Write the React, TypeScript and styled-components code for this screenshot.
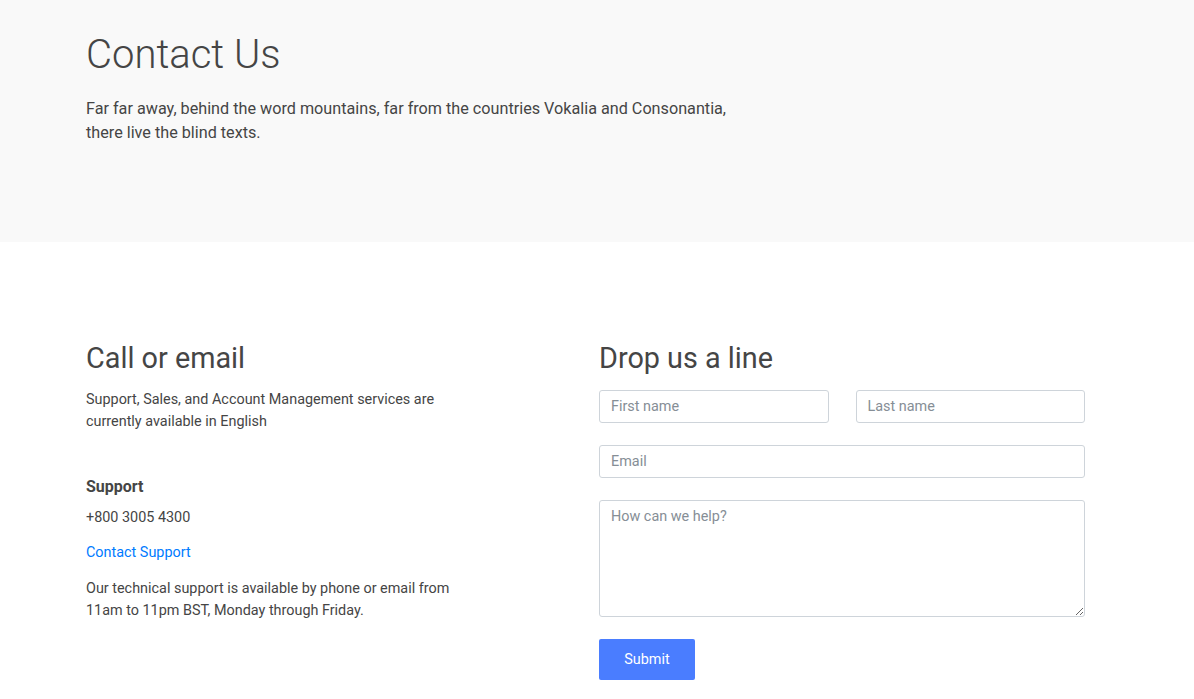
import React from "react";
import styled, { createGlobalStyle } from "styled-components";

const Global = createGlobalStyle`
  * { box-sizing: border-box; }
  body {
    margin: 0;
    background: #fff;
    font-family: Roboto, "Liberation Sans", sans-serif;
    color: #454545;
  }
`;

const Hero = styled.header`
  background: #f9f9f9;
  height: 242px;
  padding-top: 31px;
`;

const Container = styled.div`
  width: 1000px;
  margin-left: 86px;
`;

const Title = styled.h1`
  margin: 0 0 18px;
  font-size: 40px;
  line-height: 48px;
  font-weight: 300;
  color: #454545;
`;

const Lead = styled.p`
  margin: 0;
  font-size: 16.2px;
  line-height: 24px;
  max-width: 660px;
`;

const Section = styled.section`
  padding-top: 99px;
  padding-bottom: 40px;
`;

const Columns = styled.div`
  display: grid;
  grid-template-columns: 513px 486px;
`;

const Col = styled.div`
  display: flex;
  flex-direction: column;
`;

const Heading = styled.h2`
  margin: 0;
  font-size: 28.8px;
  line-height: 34px;
  font-weight: 400;
  color: #454545;
`;

const Text = styled.p<{ $top: number }>`
  margin: ${(p) => p.$top}px 0 0;
  font-size: 14.4px;
  line-height: 21.6px;
  max-width: 375px;
`;

const Label = styled.h3`
  margin: 43px 0 0;
  font-size: 16px;
  line-height: 24px;
  font-weight: 700;
`;

const Link = styled.a`
  margin-top: 13px;
  font-size: 14.4px;
  line-height: 21.6px;
  color: #007bff;
  text-decoration: none;
`;

const Form = styled.form`
  display: flex;
  flex-direction: column;
  gap: 22px;
  margin-top: 15px;
`;

const Row = styled.div`
  display: grid;
  grid-template-columns: 1fr 1fr;
  column-gap: 27px;
`;

const fieldCss = `
  width: 100%;
  border: 1px solid #ced4da;
  border-radius: 3px;
  background: #fff;
  font-family: Roboto, "Liberation Sans", sans-serif;
  font-size: 14.4px;
  color: #495057;
  padding: 0 11px;
  outline: none;
  &::placeholder { color: #868e96; }
`;

const Input = styled.input`
  ${fieldCss}
  height: 33px;
  padding-bottom: 1px;
`;

const TextArea = styled.textarea`
  ${fieldCss}
  display: block;
  height: 117px;
  padding-top: 5px;
  line-height: 21px;
  resize: vertical;
`;

const Submit = styled.button`
  align-self: flex-start;
  width: 96px;
  height: 41px;
  padding: 0 0 1px;
  border: none;
  border-radius: 2px;
  background: #4a7dff;
  color: #fff;
  font-family: Roboto, "Liberation Sans", sans-serif;
  font-size: 14.4px;
`;

export default function App() {
  return (
    <>
      <Global />
      <Hero>
        <Container>
          <Title>Contact Us</Title>
          <Lead>
            Far far away, behind the word mountains, far from the countries Vokalia and Consonantia,
            there live the blind texts.
          </Lead>
        </Container>
      </Hero>
      <Section>
        <Container>
          <Columns>
            <Col>
              <Heading>Call or email</Heading>
              <Text $top={14}>
                Support, Sales, and Account Management services are currently available in English
              </Text>
              <Label>Support</Label>
              <Text $top={8}>+800 3005 4300</Text>
              <Link href="#">Contact Support</Link>
              <Text $top={15}>
                Our technical support is available by phone or email from 11am to 11pm BST, Monday
                through Friday.
              </Text>
            </Col>
            <Col>
              <Heading>Drop us a line</Heading>
              <Form onSubmit={(e) => e.preventDefault()}>
                <Row>
                  <Input placeholder="First name" />
                  <Input placeholder="Last name" />
                </Row>
                <Input placeholder="Email" />
                <TextArea placeholder="How can we help?" />
                <Submit type="submit">Submit</Submit>
              </Form>
            </Col>
          </Columns>
        </Container>
      </Section>
    </>
  );
}
